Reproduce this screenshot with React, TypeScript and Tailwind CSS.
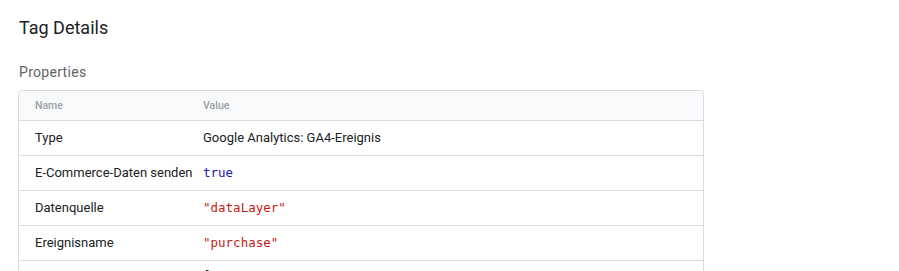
import React from 'react';

type Row = { name: string; value: string; kind: 'text' | 'bool' | 'string' | 'code' };

const rows: Row[] = [
  { name: 'Type', value: 'Google Analytics: GA4-Ereignis', kind: 'text' },
  { name: 'E-Commerce-Daten senden', value: 'true', kind: 'bool' },
  { name: 'Datenquelle', value: '"dataLayer"', kind: 'string' },
  { name: 'Ereignisname', value: '"purchase"', kind: 'string' },
];

const valueClass = {
  text: 'text-[13px] text-[#202124]',
  bool: "font-['DejaVu_Sans_Mono',monospace] text-[12.5px] text-[#1a1aa6]",
  string: "font-['DejaVu_Sans_Mono',monospace] text-[12.5px] text-[#c41a16]",
  code: "font-['DejaVu_Sans_Mono',monospace] text-[12.5px] text-[#202124]",
};

export default function App() {
  return (
    <div className="h-[271px] w-[899px] overflow-hidden bg-white font-['Roboto',sans-serif]">
      <div className="px-[19px] pt-[16px]">
        <h1 className="text-[18px] leading-[24px] text-[#202124]">Tag Details</h1>
        <h2 className="mt-[22px] text-[14px] leading-[20px] tracking-[0.3px] text-[#5f6368]">Properties</h2>
        <div className="mt-[8px] ml-[-1px] w-[686px] rounded-t-[4px] border border-[#dadce0]">
          <div className="grid h-[30px] grid-cols-[184px_1fr] items-center rounded-t-[4px] border-b border-[#dadce0] bg-[#f8f9fa] text-[10.5px] font-medium text-[#9aa0a6]">
            <div className="pl-4">Name</div>
            <div>Value</div>
          </div>
          {rows.map((row, i) => (
            <div
              key={i}
              className="grid h-[35px] grid-cols-[184px_1fr] items-center border-b border-[#dadce0]"
            >
              <div className="pl-4 text-[13px] text-[#202124]">{row.name}</div>
              <div className={valueClass[row.kind]}>{row.value}</div>
            </div>
          ))}
          <div className="grid grid-cols-[184px_1fr] py-[6px]">
            <div className="pl-4 text-[13px] text-[#202124]"></div>
            <pre className={valueClass.code + ' leading-[18px]'}>{'[\n  {\n    "item_id": "SKU_12345"\n  }\n]'}</pre>
          </div>
        </div>
      </div>
    </div>
  );
}
